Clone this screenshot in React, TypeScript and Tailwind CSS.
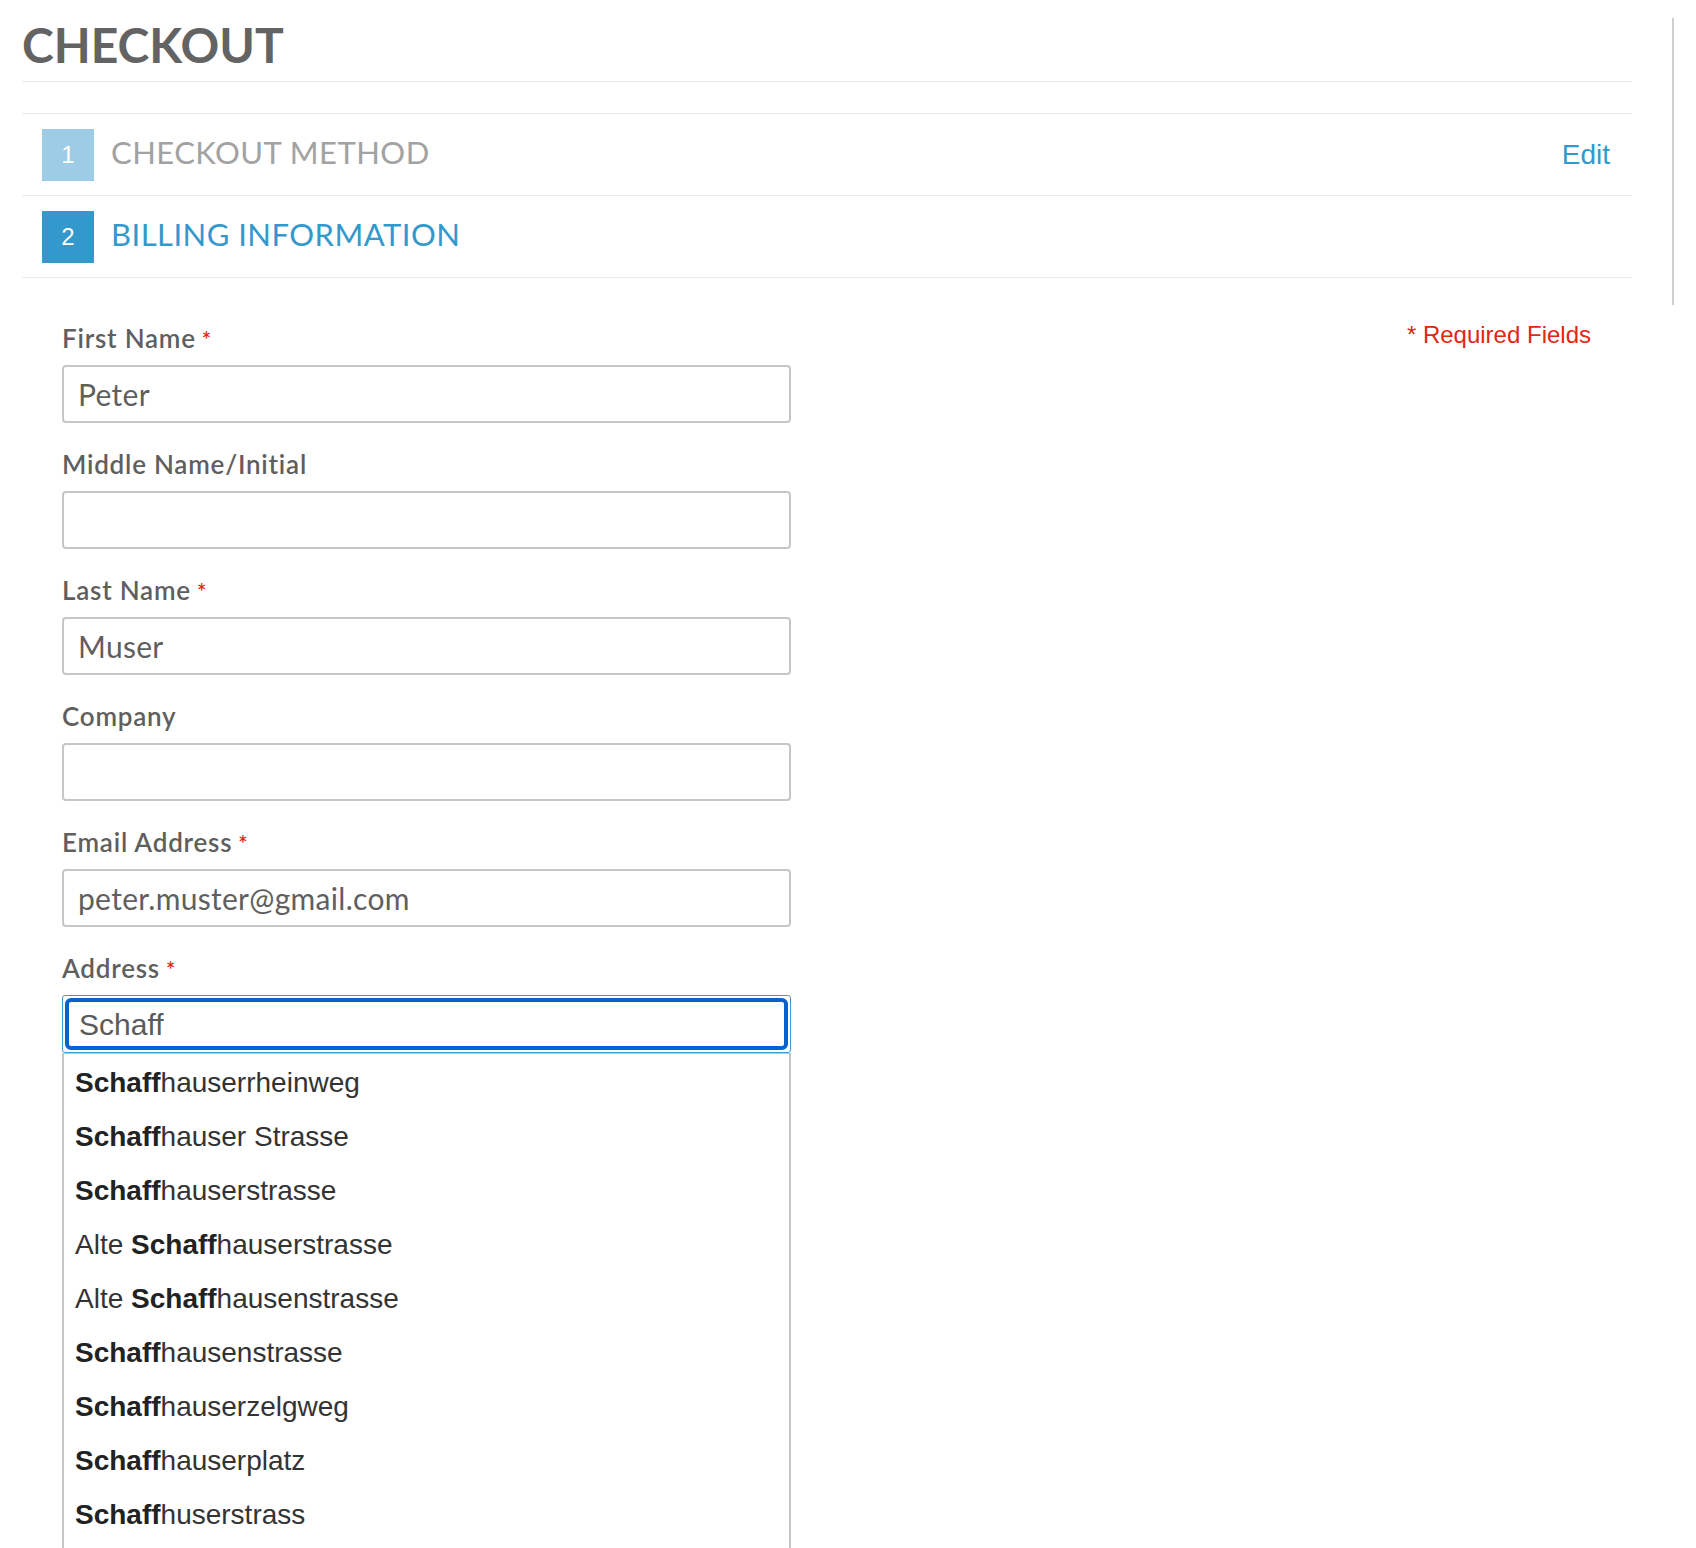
import React from "react";

const raleway = { fontFamily: "Lato, 'Open Sans', sans-serif" };
const helvetica = { fontFamily: "'Liberation Sans', Arial, sans-serif" };

type FieldProps = {
  label: string;
  value?: string;
  required?: boolean;
};

const Label = ({ text, required }: { text: string; required?: boolean }) => (
  <label
    className="h-[28px] text-[26px] leading-[28px] font-semibold tracking-[0.03em] text-[#5f5f5f] whitespace-nowrap"
    style={raleway}
  >
    {text}
    {required && <span className="ml-[6px] text-[22px] text-[#e2240f]">*</span>}
  </label>
);

const Field = ({ label, value, required }: FieldProps) => {
  return (
    <div className="flex flex-col pb-[27px]">
      <Label text={label} required={required} />
      <div
        className="mt-[13px] h-[58px] border-2 border-[#c6c6c6] rounded-[4px] flex items-center pl-[14px] text-[30px] tracking-[0.01em] text-[#5f5f5f]"
        style={raleway}
      >
        {value}
      </div>
    </div>
  );
};

const suggestions: [string, string, string][] = [
  ["", "Schaff", "hauserrheinweg"],
  ["", "Schaff", "hauser Strasse"],
  ["", "Schaff", "hauserstrasse"],
  ["Alte ", "Schaff", "hauserstrasse"],
  ["Alte ", "Schaff", "hausenstrasse"],
  ["", "Schaff", "hausenstrasse"],
  ["", "Schaff", "hauserzelgweg"],
  ["", "Schaff", "hauserplatz"],
  ["", "Schaff", "huserstrass"],
];

const Step = ({ n, title, active, edit }: { n: number; title: string; active?: boolean; edit?: boolean }) => {
  return (
    <div className="h-[82px] border-b border-[#ebebeb] flex items-center pl-[20px] pr-[22px]">
      <span
        className={
          "w-[52px] h-[52px] flex items-center justify-center text-white text-[24px] " +
          (active ? "bg-[#3399cc]" : "bg-[#9ccce6]")
        }
        style={helvetica}
      >
        {n}
      </span>
      <span
        className={
          "ml-[17px] mb-[4px] text-[31px] tracking-[0.015em] " + (active ? "text-[#3399cc]" : "text-[#a2a2a2]")
        }
        style={raleway}
      >
        {title}
      </span>
      {edit && (
        <a className="ml-auto text-[28px] text-[#3399cc]" style={helvetica}>
          Edit
        </a>
      )}
    </div>
  );
};

export default function App() {
  return (
    <div className="w-[1696px] h-[1548px] overflow-hidden bg-white flex">
      <div className="w-[1610px] ml-[22px] flex flex-col">
        <h1
          className="pt-[21px] pb-[12px] text-[48px] leading-[48px] font-bold text-[#636363] border-b border-[#ebebeb]"
          style={raleway}
        >
          CHECKOUT
        </h1>

        <div className="mt-[31px] border-t border-[#ebebeb]">
          <Step n={1} title="CHECKOUT METHOD" edit />
          <Step n={2} title="BILLING INFORMATION" active />
        </div>

        <div className="flex">
          <div className="ml-[40px] w-[729px] pt-[46px] flex flex-col">
            <Field label="First Name" value="Peter" required />
            <Field label="Middle Name/Initial" />
            <Field label="Last Name" value="Muser" required />
            <Field label="Company" />
            <Field label="Email Address" value="peter.muster@gmail.com" required />

            <div className="flex flex-col">
              <Label text="Address" required />
              <div className="mt-[13px] h-[58px] border border-[#3d9bd3] rounded-[3px] p-[2px]">
                <div
                  className="h-full border-[4px] border-[#0562d1] rounded-[6px] flex items-center pl-[10px] text-[30px] text-[#5a5a5a]"
                  style={helvetica}
                >
                  Schaff
                </div>
              </div>
              <ul
                className="border-t border-x-2 border-[#c6c6c6] pl-[11px] pt-[2px] pb-[40px] text-[28px] leading-[54px] text-[#333333]"
                style={helvetica}
              >
                {suggestions.map(([pre, bold, rest], i) => (
                  <li key={i} className="h-[54px] whitespace-nowrap">
                    {pre}
                    <b className="font-bold text-[#222222]">{bold}</b>
                    {rest}
                  </li>
                ))}
              </ul>
            </div>
          </div>

          <div className="ml-auto mr-[41px] pt-[43px]">
            <span className="text-[24px] leading-[28px] text-[#e2260f]" style={helvetica}>
              * Required Fields
            </span>
          </div>
        </div>
      </div>

      <div className="ml-[40px] mt-[18px] w-[2px] h-[287px] bg-[#cfcfcf]" />
    </div>
  );
}
